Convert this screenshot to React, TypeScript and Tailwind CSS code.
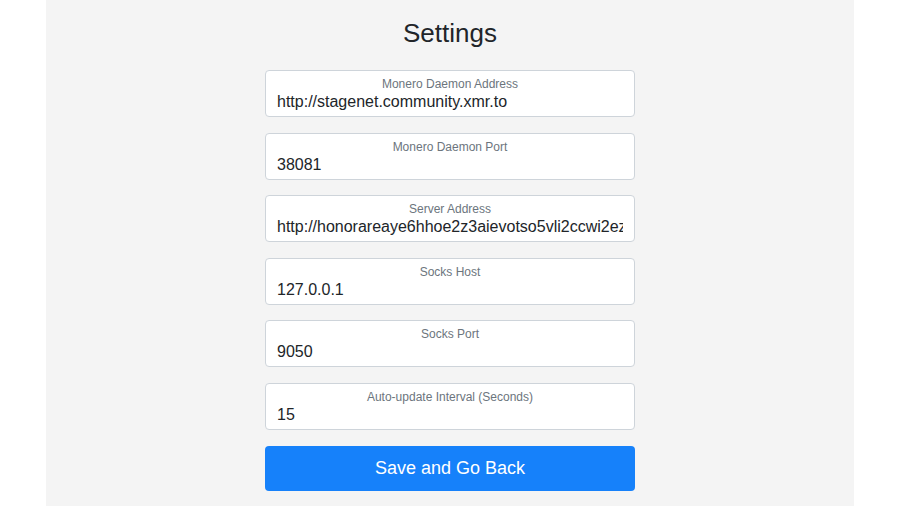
const fields = [
  { label: 'Monero Daemon Address', value: 'http://stagenet.community.xmr.to' },
  { label: 'Monero Daemon Port', value: '38081' },
  { label: 'Server Address', value: 'http://honorareaye6hhoe2z3aievotso5vli2ccwi2ezjq7pqd6lh2o3mxqd.onion' },
  { label: 'Socks Host', value: '127.0.0.1' },
  { label: 'Socks Port', value: '9050' },
  { label: 'Auto-update Interval (Seconds)', value: '15' },
];

function Field({ label, value }: { label: string; value: string }) {
  return (
    <div className="w-full rounded-[4px] border border-[#ced4da] bg-white px-[11px] pt-[5px] pb-[4px]">
      <div className="text-center text-[12px] leading-[16px] text-[#6c757d]">{label}</div>
      <input
        readOnly
        value={value}
        className="block w-full bg-transparent p-0 text-[16px] leading-[20px] text-[#212529] outline-none"
      />
    </div>
  );
}

export default function App() {
  return (
    <div className="flex h-[506px] w-full justify-center bg-white" style={{ fontFamily: '"Liberation Sans", Arial, sans-serif' }}>
      <div className="flex h-full w-[808px] flex-col items-center bg-[#f4f4f4]">
        <h1 className="mt-[17px] text-[26px] leading-[32px] text-[#212529]">Settings</h1>
        <div className="mt-[21px] flex w-[370px] flex-col gap-[15.6px]">
          {fields.map((f) => (
            <Field key={f.label} label={f.label} value={f.value} />
          ))}
          <button className="h-[45px] w-full rounded-[4px] bg-[#1681fa] text-[18px] text-white">
            Save and Go Back
          </button>
        </div>
      </div>
    </div>
  );
}
